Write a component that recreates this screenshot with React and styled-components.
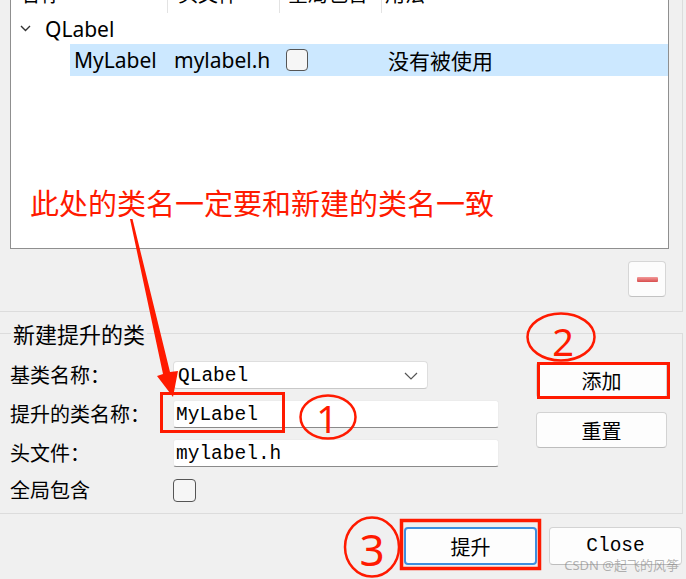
import React from "react";
import styled, { createGlobalStyle } from "styled-components";

const GlobalStyle = createGlobalStyle`
  body {
    margin: 0;
    background: #f0f0f0;
    font-family: "Segoe UI", "Noto Sans", "Noto Sans CJK SC", sans-serif;
    color: #000;
  }
`;

const UI_FONT = `"Segoe UI", "Noto Sans", "Noto Sans CJK SC", sans-serif`;
const CJK_FONT = `"Noto Sans CJK SC", "Noto Sans", sans-serif`;
const MONO_FONT = `"Liberation Mono", "Noto Sans CJK SC", monospace`;
const RED = "#ff1a00";

const Page = styled.div`
  position: relative;
  width: 686px;
  height: 579px;
  overflow: hidden;
  background: #f0f0f0;
`;

const TopSection = styled.div`
  margin-right: 3px;
  padding: 0 13px 0 10px;
  border-right: 1px solid #dcdcdc;
  border-bottom: 1px solid #dcdcdc;
`;

const Tree = styled.div`
  box-sizing: border-box;
  height: 249px;
  background: #fff;
  border: 1px solid #8f8f8f;
  border-top: none;
`;

const HeaderRow = styled.div`
  display: flex;
  height: 13px;
  overflow: hidden;
`;

const HeaderCell = styled.div`
  display: flex;
  align-items: flex-end;
  box-sizing: border-box;
  width: ${(p) => (p.w ? `${p.w}px` : "auto")};
  flex: ${(p) => (p.w ? "none" : "1")};
  padding-left: ${(p) => p.pad || 6}px;
  border-right: ${(p) => (p.w ? "1px solid #e3e3e3" : "none")};
  font-family: ${CJK_FONT};
  font-size: 20px;
  line-height: 20px;

  span {
    margin-bottom: 9px;
    white-space: nowrap;
  }
`;

const GroupRow = styled.div`
  display: flex;
  align-items: center;
  height: 31px;
  font-size: 21px;
`;

const Chevron = styled.svg`
  margin-left: 9px;
  margin-right: 14px;
`;

const ItemRow = styled.div`
  display: flex;
  align-items: center;
  height: 32px;
  margin-left: 59px;
  background: #cce8ff;
  font-size: 21px;
`;

const ItemCell = styled.div`
  display: flex;
  align-items: center;
  box-sizing: border-box;
  width: ${(p) => (p.w ? `${p.w}px` : "auto")};
  flex: ${(p) => (p.w ? "none" : "1")};
  padding-left: ${(p) => p.pad}px;
  white-space: nowrap;
`;

const Check = styled.div`
  box-sizing: border-box;
  width: ${(p) => p.size}px;
  height: ${(p) => p.size}px;
  border: 1.5px solid #555;
  border-radius: 4px;
  background: #f6f6f6;
`;

const Toolbar = styled.div`
  display: flex;
  justify-content: flex-end;
  align-items: flex-start;
  height: 62px;
  box-sizing: border-box;
  padding: 12px 3px 0 0;
`;

const ToolButton = styled.div`
  display: flex;
  align-items: center;
  justify-content: center;
  box-sizing: border-box;
  width: 38px;
  height: 36px;
  background: #fcfcfc;
  border: 1px solid #d6d6d6;
  border-bottom-color: #c2c2c2;
  border-radius: 4px;
`;

const MinusBar = styled.div`
  width: 21px;
  height: 5px;
  border-radius: 1px;
  background: linear-gradient(#f29a9a, #d84c4c);
`;

const GroupBox = styled.div`
  position: relative;
  box-sizing: border-box;
  height: 181px;
  margin: 21px 3px 0 0;
  padding: 27px 15px 0 10px;
  border: 1px solid #dcdcdc;
  border-left: none;
  display: flex;
  align-items: flex-start;
`;

const GroupTitle = styled.div`
  position: absolute;
  top: -12px;
  left: 11px;
  padding: 0 2px;
  background: #f0f0f0;
  font-family: ${CJK_FONT};
  font-size: 22px;
  line-height: 23px;
`;

const Form = styled.div`
  display: grid;
  grid-template-columns: 163px auto;
  grid-template-rows: 28px 28px 28px 24px;
  row-gap: 11px;
  align-items: center;
`;

const Label = styled.div`
  font-family: ${CJK_FONT};
  font-size: 20px;
  line-height: 24px;
  white-space: nowrap;
`;

const Combo = styled.div`
  display: flex;
  align-items: center;
  justify-content: space-between;
  box-sizing: border-box;
  width: 255px;
  height: 28px;
  padding: 1px 9px 0 4px;
  background: #fff;
  border: 1px solid #dedede;
  border-bottom-color: #c8c8c8;
  border-radius: 4px;
  font-family: ${MONO_FONT};
  font-size: 19.5px;
`;

const Field = styled.div`
  display: flex;
  align-items: center;
  box-sizing: border-box;
  width: 326px;
  height: 28px;
  padding: 1px 0 0 2px;
  background: #fff;
  border: 1px solid #ececec;
  border-bottom: 1px solid #8a8a8a;
  border-radius: 3px;
  font-family: ${MONO_FONT};
  font-size: 19.5px;
`;

const SideButtons = styled.div`
  display: flex;
  flex-direction: column;
  gap: 14px;
  margin: 1px 0 0 auto;
`;

const Button = styled.div`
  display: flex;
  align-items: center;
  justify-content: center;
  box-sizing: border-box;
  width: ${(p) => p.w}px;
  height: ${(p) => p.h}px;
  background: #fdfdfd;
  border: ${(p) => (p.primary ? "2px solid #3d8fe0" : "1px solid #d3d3d3")};
  border-bottom-color: ${(p) => (p.primary ? "#3d8fe0" : "#bdbdbd")};
  border-radius: 4px;
  font-family: ${(p) => (p.mono ? MONO_FONT : CJK_FONT)};
  font-size: ${(p) => (p.mono ? 19.5 : 20)}px;
`;

const BottomBar = styled.div`
  display: flex;
  justify-content: flex-end;
  gap: 12px;
  padding: 13px 4px 0 0;
`;

const Watermark = styled.div`
  position: absolute;
  right: 7px;
  bottom: 7px;
  font-family: ${UI_FONT};
  font-size: 13px;
  line-height: 14px;
  color: rgba(130, 130, 130, 0.6);
  white-space: nowrap;
`;

const Note = styled.div`
  position: absolute;
  left: 30px;
  top: 186px;
  font-family: ${CJK_FONT};
  font-size: 29px;
  line-height: 32px;
  color: ${RED};
  white-space: nowrap;
`;

const Overlay = styled.svg`
  position: absolute;
  left: 0;
  top: 0;
  pointer-events: none;
`;

function Annotations() {
  return (
    <Overlay width="686" height="579" viewBox="0 0 686 579">
      <polygon
        points="130,219 132.5,219 170,372 178,371 173,397 157,376 163,374"
        fill={RED}
      />
      <rect x="161.5" y="393.5" width="122" height="38" fill="none" stroke={RED} strokeWidth="3" />
      <ellipse cx="328" cy="417" rx="27.5" ry="21.5" fill="none" stroke={RED} strokeWidth="2.5" />
      <text x="327" y="433" fontSize="38" fontFamily="Noto Sans, sans-serif" textAnchor="middle" fill={RED}>
        1
      </text>
      <rect x="538.5" y="363.5" width="130" height="34" fill="none" stroke={RED} strokeWidth="3" />
      <ellipse cx="561" cy="337" rx="33.5" ry="23.5" fill="none" stroke={RED} strokeWidth="2.5" />
      <text x="563" y="356" fontSize="38" fontFamily="Noto Sans, sans-serif" textAnchor="middle" fill={RED}>
        2
      </text>
      <rect x="401.5" y="520.5" width="138" height="48" fill="none" stroke={RED} strokeWidth="3.5" />
      <ellipse cx="372" cy="547" rx="27" ry="29.5" fill="none" stroke={RED} strokeWidth="2.5" />
      <text x="372" y="566" fontSize="44" fontFamily="Noto Sans, sans-serif" textAnchor="middle" fill={RED}>
        3
      </text>
    </Overlay>
  );
}

export default function App() {
  return (
    <>
      <GlobalStyle />
      <Page>
        <TopSection>
          <Tree>
            <HeaderRow>
              <HeaderCell w={157} pad={9}>
                <span>名称</span>
              </HeaderCell>
              <HeaderCell w={112} pad={10}>
                <span>头文件</span>
              </HeaderCell>
              <HeaderCell w={102} pad={8}>
                <span>全局包含</span>
              </HeaderCell>
              <HeaderCell pad={3}>
                <span>用法</span>
              </HeaderCell>
            </HeaderRow>
            <GroupRow>
              <Chevron width="11" height="7" viewBox="0 0 11 7">
                <path d="M1 1 L5.5 5.5 L10 1" fill="none" stroke="#333" strokeWidth="1.4" />
              </Chevron>
              QLabel
            </GroupRow>
            <ItemRow>
              <ItemCell w={98} pad={4}>
                MyLabel
              </ItemCell>
              <ItemCell w={112} pad={6}>
                mylabel.h
              </ItemCell>
              <ItemCell w={102} pad={6}>
                <Check size={22} />
              </ItemCell>
              <ItemCell pad={6}>没有被使用</ItemCell>
            </ItemRow>
          </Tree>
          <Toolbar>
            <ToolButton>
              <MinusBar />
            </ToolButton>
          </Toolbar>
        </TopSection>

        <GroupBox>
          <GroupTitle>新建提升的类</GroupTitle>
          <Form>
            <Label>基类名称：</Label>
            <Combo>
              QLabel
              <svg width="14" height="8" viewBox="0 0 14 8">
                <path d="M1 1 L7 7 L13 1" fill="none" stroke="#555" strokeWidth="1.2" />
              </svg>
            </Combo>
            <Label>提升的类名称：</Label>
            <Field>MyLabel</Field>
            <Label>头文件：</Label>
            <Field>mylabel.h</Field>
            <Label>全局包含</Label>
            <Check size={23} />
          </Form>
          <SideButtons>
            <Button w={131} h={36}>
              添加
            </Button>
            <Button w={131} h={36}>
              重置
            </Button>
          </SideButtons>
        </GroupBox>

        <BottomBar>
          <Button w={133} h={38} primary>
            提升
          </Button>
          <Button w={133} h={38} mono>
            Close
          </Button>
        </BottomBar>

        <Note>此处的类名一定要和新建的类名一致</Note>
        <Annotations />
        <Watermark>CSDN @起飞的风筝</Watermark>
      </Page>
    </>
  );
}
